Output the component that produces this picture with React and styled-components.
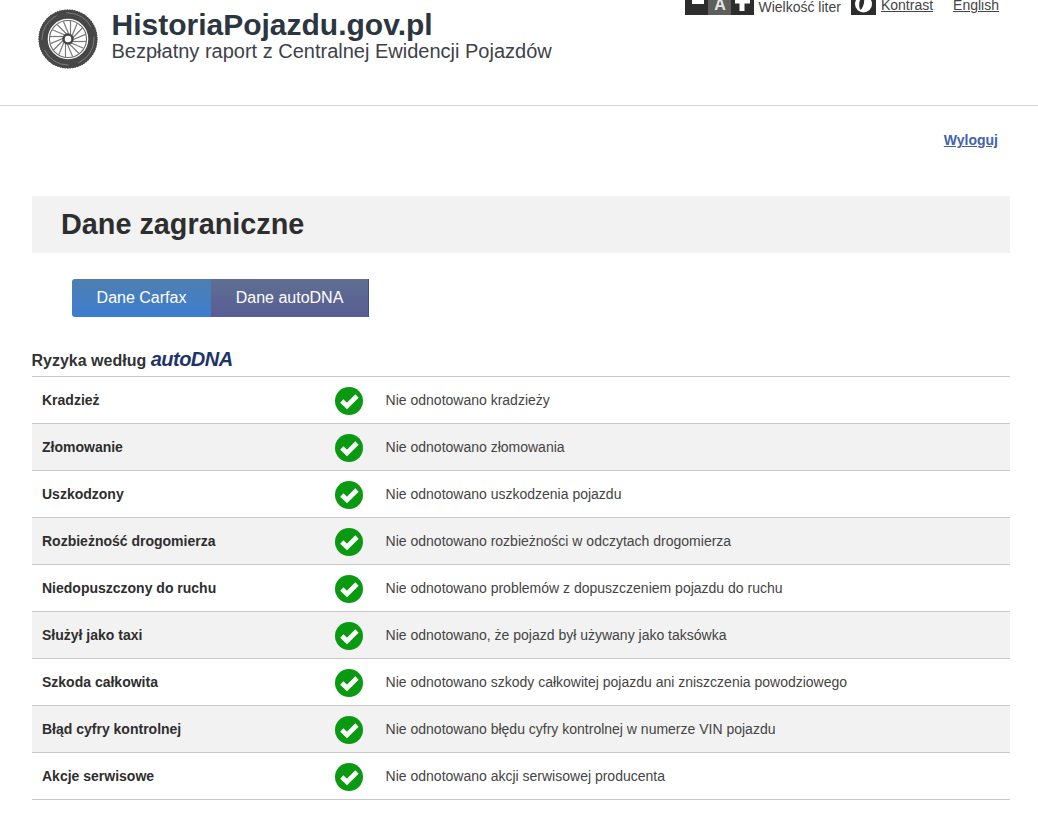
import React from "react";
import styled, { createGlobalStyle } from "styled-components";

const GlobalStyle = createGlobalStyle`
  html, body {
    margin: 0;
    padding: 0;
    background: #fff;
    color: #333;
    font-family: "Liberation Sans", Arial, sans-serif;
  }
`;

const Page = styled.div`
  width: 1038px;
  height: 817px;
  overflow: hidden;
`;

const Header = styled.header`
  height: 105px;
  border-bottom: 1px solid #d4d4d4;
  display: flex;
  justify-content: space-between;
  align-items: flex-start;
  padding: 0 39px 0 38px;
  overflow: hidden;
`;

const Brand = styled.div`
  display: flex;
  gap: 13.5px;
  padding-top: 9px;
`;

const BrandTitle = styled.div`
  font-size: 30px;
  line-height: 32px;
  font-weight: 700;
  color: #2b3640;
`;

const BrandSub = styled.div`
  font-size: 20px;
  line-height: 20px;
  color: #3c4248;
`;

const Tools = styled.div`
  display: flex;
  align-items: flex-end;
  height: 15px;
  font-size: 14px;
  line-height: 16px;
  color: #444;
`;

const SizeButton = styled.span`
  width: 23px;
  height: 15px;
  background: ${(p) => (p.$mid ? "#5e5e5e" : "#2d2d2d")};
  color: #e4e4e4;
  font-size: 16px;
  font-weight: 700;
  line-height: 10px;
  text-align: center;
  flex: none;
  overflow: hidden;
`;

const SizeLabel = styled.span`
  margin: 0 10px 0 4px;
  white-space: nowrap;
`;

const ContrastBox = styled.span`
  width: 25px;
  height: 15px;
  background: #2d2d2d;
  flex: none;
  overflow: hidden;
`;

const ToolLink = styled.a`
  color: #444;
  text-decoration: underline;
  white-space: nowrap;
  margin-left: ${(p) => p.$gap}px;
  position: relative;
  top: -2px;
`;

const Main = styled.main`
  padding: 0 28px 0 32px;
`;

const LogoutRow = styled.div`
  display: flex;
  justify-content: flex-end;
  padding: 26px 12px 0 0;
  height: 64px;
`;

const Logout = styled.a`
  color: #3f62ab;
  font-size: 14px;
  line-height: 17px;
  font-weight: 700;
  text-decoration: underline;
`;

const SectionTitle = styled.h1`
  margin: 0;
  height: 57px;
  padding-left: 29px;
  background: #f2f2f2;
  font-size: 28.8px;
  line-height: 56px;
  font-weight: 700;
  color: #2e2e2e;
`;

const Tabs = styled.div`
  display: flex;
  margin: 26px 0 0 40px;
`;

const Tab = styled.div`
  height: 38px;
  width: ${(p) => p.$width}px;
  box-sizing: border-box;
  color: #fff;
  font-size: 16px;
  line-height: 37px;
  text-align: center;
  border-radius: ${(p) => (p.$first ? "3px 0 0 3px" : "0")};
  border-right: ${(p) => (p.$first ? "none" : "1px solid #47507c")};
  background: ${(p) =>
    p.$first
      ? "linear-gradient(#4f7fb0, #3c7dd0)"
      : "linear-gradient(#5f6f92, #585c94)"};
`;

const RiskTitle = styled.h2`
  margin: 30px 0 0 -0.5px;
  height: 29px;
  font-size: 16px;
  line-height: 24px;
  font-weight: 700;
  color: #333;
`;

const AutoDna = styled.span`
  font-size: 20px;
  font-style: italic;
  font-weight: 700;
  color: #1d3468;
  letter-spacing: -0.5px;
`;

const Table = styled.div`
  border-top: 1px solid #c9c9c9;
`;

const Row = styled.div`
  display: grid;
  grid-template-columns: 293px 50.6px 1fr;
  align-items: center;
  height: 46px;
  padding-left: 10px;
  border-bottom: 1px solid #c9c9c9;
  background: ${(p) => (p.$odd ? "#f2f2f2" : "#fff")};
  font-size: 14px;
`;

const RowName = styled.div`
  font-weight: 700;
  color: #2e2e2e;
  margin-top: -1px;
`;

const RowText = styled.div`
  color: #444;
  margin-top: -1px;
`;

const CheckIcon = styled.svg`
  display: block;
  margin-top: 2px;
`;

const Check = () => (
  <CheckIcon width="28" height="28" viewBox="0 0 28 28">
    <circle cx="14" cy="14" r="14" fill="#0a9a12" />
    <path d="M6.800 14l5.200 5L22 9" fill="none" stroke="#fff" strokeWidth="4.600" />
  </CheckIcon>
);

const spokes = Array.from({ length: 16 }, (_, i) => (i * 360) / 16);

const Wheel = () => (
  <svg width="60" height="60" viewBox="0 0 60 60">
    <circle cx="30" cy="30" r="24.800" fill="none" stroke="#474747" strokeWidth="9" />
    <circle cx="30" cy="30" r="29" fill="none" stroke="#474747" strokeWidth="1.200" strokeDasharray="1.500 1" />
    <circle cx="30" cy="30" r="26" fill="none" stroke="#a0a0a0" strokeWidth="0.600" strokeDasharray="30 10" />
    <circle cx="30" cy="30" r="18.500" fill="none" stroke="#666" strokeWidth="1.100" />
    {spokes.map((a) => (
      <line
        key={a}
        x1="30"
        y1="30"
        x2="30"
        y2="12"
        stroke="#7a7a7a"
        strokeWidth="1.200"
        transform={`rotate(${a} 30 30) translate(2.500 0)`}
      />
    ))}
    <circle cx="30" cy="30" r="4.500" fill="#fff" stroke="#474747" strokeWidth="2.500" />
  </svg>
);

const rows = [
  ["Kradzież", "Nie odnotowano kradzieży"],
  ["Złomowanie", "Nie odnotowano złomowania"],
  ["Uszkodzony", "Nie odnotowano uszkodzenia pojazdu"],
  ["Rozbieżność drogomierza", "Nie odnotowano rozbieżności w odczytach drogomierza"],
  ["Niedopuszczony do ruchu", "Nie odnotowano problemów z dopuszczeniem pojazdu do ruchu"],
  ["Służył jako taxi", "Nie odnotowano, że pojazd był używany jako taksówka"],
  ["Szkoda całkowita", "Nie odnotowano szkody całkowitej pojazdu ani zniszczenia powodziowego"],
  ["Błąd cyfry kontrolnej", "Nie odnotowano błędu cyfry kontrolnej w numerze VIN pojazdu"],
  ["Akcje serwisowe", "Nie odnotowano akcji serwisowej producenta"],
];

const App = () => {
  return (
    <Page>
      <GlobalStyle />
      <Header>
        <Brand>
          <Wheel />
          <div>
            <BrandTitle>HistoriaPojazdu.gov.pl</BrandTitle>
            <BrandSub>Bezpłatny raport z Centralnej Ewidencji Pojazdów</BrandSub>
          </div>
        </Brand>
        <Tools>
          <SizeButton>
            <svg width="23" height="15" viewBox="0 0 23 15">
              <rect x="7" y="0" width="12" height="4" fill="#fff" />
            </svg>
          </SizeButton>
          <SizeButton $mid>A</SizeButton>
          <SizeButton>
            <svg width="23" height="15" viewBox="0 0 23 15">
              <path d="M8.500 0h5v11h-5zM4 0h15v3.500H4z" fill="#fff" />
            </svg>
          </SizeButton>
          <SizeLabel>Wielkość liter</SizeLabel>
          <ContrastBox>
            <svg width="25" height="15" viewBox="0 0 25 15">
              <circle cx="12.500" cy="4" r="8.500" fill="#fff" />
              <path d="M13-5C8-2 7 6 9.500 10 12 8 14 3 13-5z" fill="#2d2d2d" />
            </svg>
          </ContrastBox>
          <ToolLink $gap={5}>Kontrast</ToolLink>
          <ToolLink $gap={20}>English</ToolLink>
        </Tools>
      </Header>
      <Main>
        <LogoutRow>
          <Logout>Wyloguj</Logout>
        </LogoutRow>
        <SectionTitle>Dane zagraniczne</SectionTitle>
        <Tabs>
          <Tab $first $width={139}>Dane Carfax</Tab>
          <Tab $width={158}>Dane autoDNA</Tab>
        </Tabs>
        <RiskTitle>
          Ryzyka według <AutoDna>autoDNA</AutoDna>
        </RiskTitle>
        <Table>
          {rows.map(([name, text], i) => (
            <Row key={name} $odd={i % 2 === 1}>
              <RowName>{name}</RowName>
              <Check />
              <RowText>{text}</RowText>
            </Row>
          ))}
        </Table>
      </Main>
    </Page>
  );
};

export default App;
